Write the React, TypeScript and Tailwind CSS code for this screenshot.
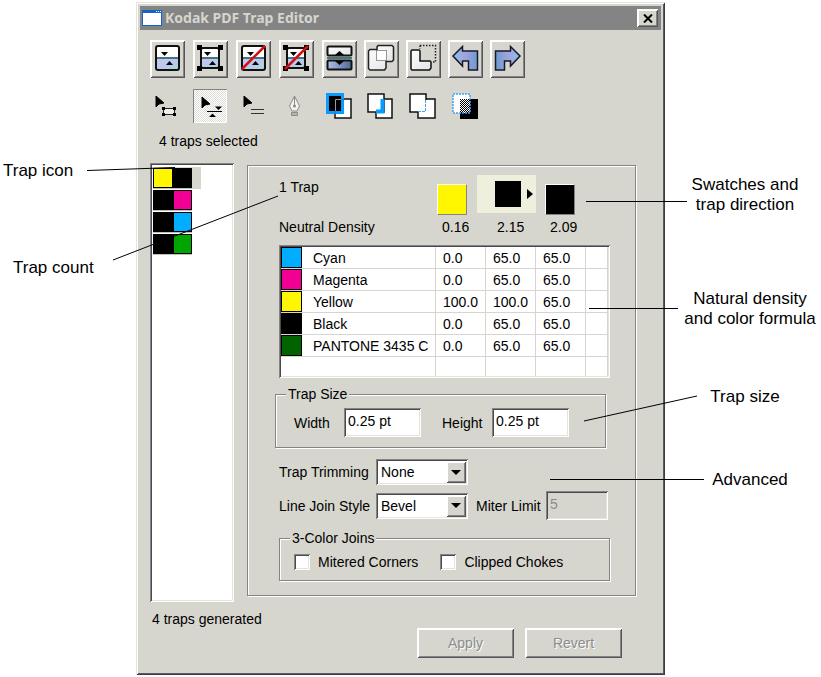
import React, { useState } from "react";

const raised =
  "shadow-[inset_1px_1px_0_#ffffff,inset_-1px_-1px_0_#55555a,inset_2px_2px_0_#ffffff,inset_-2px_-2px_0_#848484]";
const sunken =
  "shadow-[inset_1px_1px_0_#848484,inset_-1px_-1px_0_#ffffff,inset_2px_2px_0_#4a4a4e,inset_-2px_-2px_0_#e4e4dc]";
const etched = "border border-[#848484] shadow-[1px_1px_0_#ffffff,inset_1px_1px_0_#ffffff]";

type Tool = {
  label: string;
  icon: React.ReactNode;
  pressed?: boolean;
};

type Ink = {
  name: string;
  color: string;
  values: string[];
};

const inks: Ink[] = [
  { name: "Cyan", color: "bg-[#00adff]", values: ["0.0", "65.0", "65.0"] },
  { name: "Magenta", color: "bg-[#f20094]", values: ["0.0", "65.0", "65.0"] },
  { name: "Yellow", color: "bg-[#fff700]", values: ["100.0", "100.0", "65.0"] },
  { name: "Black", color: "bg-black", values: ["0.0", "65.0", "65.0"] },
  { name: "PANTONE 3435 C", color: "bg-[#006300]", values: ["0.0", "65.0", "65.0"] },
];

const traps = [
  { id: 1, from: "bg-[#fff700]", to: "bg-black", selected: true },
  { id: 2, from: "bg-black", to: "bg-[#f20094]", selected: false },
  { id: 3, from: "bg-black", to: "bg-[#00adff]", selected: false },
  { id: 4, from: "bg-black", to: "bg-[#00a500]", selected: false },
];

/* ---------- toolbar drawings ---------- */

const TrapPair = ({ x, y, w, h }: { x: number; y: number; w: number; h: number }) => (
  <>
    <rect x={x} y={y} width={w} height={h} rx="2" fill="#fff" />
    <path d={`M${x} 18H${x + w}V${y + h}H${x}z`} fill="url(#water)" />
    <path d={`M${x} 18H${x + w}`} stroke="#45767c" strokeWidth="2" />
    <rect x={x} y={y} width={w} height={h} rx="2" fill="none" stroke="#111" strokeWidth="2" />
    <path d="M11 12h7l-3.500 4zM16 25h7l-3.500-4z" fill="#000" />
  </>
);

const Corners = () => (
  <path d="M4 5h5v5H4zM25 5h5v5h-5zM4 26h5v5H4zM25 26h5v5h-5z" fill="#000" />
);

const Slash = () => <path d="M6 29L29 6" stroke="#d60f16" strokeWidth="2.500" />;

const Pointer = ({ x, y }: { x: number; y: number }) => (
  <path d={`M${x} ${y}v11l3-3 5-1z`} fill="#000" stroke="#000" strokeLinejoin="round" />
);

const trapIcon = <TrapPair x={6} y={6} w={23} h={24} />;

const boxedTrapIcon = (
  <>
    <TrapPair x={8} y={8} w={18} h={20} />
    <Corners />
  </>
);

const undoPath = "M5 16L14.500 6.500V11H29.500V30H20.500V21H14.500V26z";

const mainTools: Tool[] = [
  { label: "Show traps", icon: trapIcon },
  { label: "Show boxed traps", icon: boxedTrapIcon },
  { label: "Remove traps", icon: <>{trapIcon}<Slash /></> },
  { label: "Remove boxed traps", icon: <>{boxedTrapIcon}<Slash /></> },
  {
    label: "Split traps",
    icon: (
      <>
        <rect x="5.500" y="6.500" width="24" height="9" rx="1" fill="url(#paper)" stroke="#111" strokeWidth="2" />
        <path d="M13 15h9l-4.500-4z" fill="#000" />
        <path d="M5 18h25" stroke="#45767c" strokeWidth="2" />
        <rect x="5.500" y="20.500" width="24" height="9" rx="1" fill="url(#steel)" stroke="#111" strokeWidth="2" />
        <path d="M13 21h9l-4.500 4z" fill="#000" />
      </>
    ),
  },
];

const shapeTools: Tool[] = [
  {
    label: "Merge shapes",
    icon: (
      <>
        <path
          d="M4.500 11L6 9.500h7V7l1-1.500h14L29.500 7v13L28 21.500h-6V28L20.500 30H6L4.500 28.500z"
          fill="url(#paper)"
          stroke="#222"
          strokeWidth="1.500"
        />
        <path d="M12.500 10.500h10v10h-10z" fill="#fff" stroke="#333" strokeDasharray="1 1" />
      </>
    ),
  },
  {
    label: "Subtract shapes",
    icon: (
      <>
        <path d="M14 5.500h15.500V22H26M14 5.500V9" fill="none" stroke="#222" strokeWidth="1.500" strokeDasharray="1.500 1.500" />
        <path
          d="M5 11l1-1h7l1 1v10h10l1 1v6l-1.500 2H6l-1-1z"
          fill="url(#paper)"
          stroke="#111"
          strokeWidth="1.500"
        />
      </>
    ),
  },
  { label: "Undo", icon: <path d={undoPath} fill="url(#arrow)" stroke="#18182c" strokeWidth="1.500" /> },
  {
    label: "Redo",
    icon: (
      <g transform="translate(35 0) scale(-1 1)">
        <path d={undoPath} fill="url(#arrow)" stroke="#18182c" strokeWidth="1.500" />
      </g>
    ),
  },
];

const selectTools: Tool[] = [
  {
    label: "Select by frame",
    icon: (
      <>
        <Pointer x={6} y={7} />
        <rect x="13.500" y="19.500" width="11" height="6" fill="#eee" stroke="#222" />
        <path d="M12 18h3v3h-3zM23 18h3v3h-3zM12 24h3v3h-3zM23 24h3v3h-3z" fill="#000" />
      </>
    ),
  },
  {
    label: "Select trap",
    pressed: true,
    icon: (
      <>
        <Pointer x={9} y={8} />
        <path d="M14 22.500h15" stroke="#000" />
        <path d="M22 17.500h7l-3.500 3.500zM16 28h7l-3.500-3.500z" fill="#000" />
      </>
    ),
  },
  {
    label: "Select lines",
    icon: (
      <>
        <Pointer x={8} y={7} />
        <path d="M15 20.500h13M15 24.500h13" stroke="#33332e" />
      </>
    ),
  },
  {
    label: "Pen",
    icon: (
      <>
        <path d="M15.500 7L10.500 17l2.500 5h5l2.500-5z" fill="#f3f3ef" stroke="#8c8c86" />
        <path d="M15.500 7v9" stroke="#8c8c86" />
        <circle cx="15.500" cy="17" r="1.500" fill="#8c8c86" />
        <path d="M12.500 23.500h6v3h-6z" fill="#b6b6ae" stroke="#8c8c86" />
      </>
    ),
  },
  {
    label: "Trap front",
    icon: (
      <>
        <rect x="13" y="10" width="16" height="19" fill="#fff" stroke="#111" strokeWidth="1.500" />
        <rect x="5.500" y="5.500" width="15" height="18" fill="#000" stroke="#089cff" strokeWidth="3" />
        <path d="M13.500 22V10.500H19" fill="none" stroke="#999" />
        <path d="M13.500 25V22M19 10.500h3" stroke="#55697a" />
      </>
    ),
  },
];

const overlapTools: Tool[] = [
  {
    label: "Trap overlap edge",
    icon: (
      <>
        <rect x="12" y="10" width="16" height="19" fill="#fff" stroke="#111" strokeWidth="1.500" />
        <rect x="4" y="5" width="16" height="18" fill="#fff" stroke="#111" strokeWidth="1.500" />
        <path d="M18.500 10v12.500H12" fill="none" stroke="#089cff" strokeWidth="4" />
      </>
    ),
  },
  {
    label: "Trap hidden edge",
    icon: (
      <>
        <rect x="12" y="10" width="17" height="19" fill="#fff" stroke="#111" strokeWidth="1.500" />
        <path d="M12 23H4V5h16v6" fill="#fff" stroke="#111" strokeWidth="1.500" />
        <path d="M5 6h14v16H5z" fill="#fff" />
        <path d="M19.500 11v11.500H12" fill="none" stroke="#3ea4f4" strokeDasharray="3 1" />
      </>
    ),
  },
  {
    label: "Overprint",
    icon: (
      <>
        <path d="M12 10h18v20H12z" fill="#000" />
        <path d="M5 5h17v19H5z" fill="#fff" />
        <path d="M12 10h10v14H12z" fill="url(#checker)" />
        <path d="M5 5h17v19H5z" fill="none" stroke="#3ea4f4" strokeWidth="1.500" strokeDasharray="2 1" />
      </>
    ),
  },
];

const IconDefs = () => (
  <svg className="absolute h-0 w-0" aria-hidden="true">
    <defs>
      <linearGradient id="water" x1="0" x2="1" y1="0" y2="1">
        <stop offset="0" stopColor="#c6c6f4" />
        <stop offset="0.500" stopColor="#bcc8ec" />
        <stop offset="1" stopColor="#a9d5dc" />
      </linearGradient>
      <linearGradient id="paper" x1="0" x2="1" y1="0" y2="1">
        <stop offset="0" stopColor="#fff" />
        <stop offset="1" stopColor="#e2e2e5" />
      </linearGradient>
      <linearGradient id="steel" x1="0" x2="1">
        <stop offset="0" stopColor="#b4bce8" />
        <stop offset="1" stopColor="#4a6c9c" />
      </linearGradient>
      <linearGradient id="arrow" x1="0" x2="1">
        <stop offset="0" stopColor="#8cc0ea" />
        <stop offset="0.500" stopColor="#a2a2dc" />
        <stop offset="1" stopColor="#6a9cd0" />
      </linearGradient>
      <pattern id="checker" width="2" height="2" patternUnits="userSpaceOnUse">
        <path d="M0 0h2v2H0z" fill="#fff" />
        <path d="M0 0h1v1H0zM1 1h1v1H1z" fill="#000" />
      </pattern>
      <pattern id="dither" width="2" height="2" patternUnits="userSpaceOnUse">
        <path d="M0 0h2v2H0z" fill="#fff" />
        <path d="M0 0h1v1H0zM1 1h1v1H1z" fill="#deded8" />
      </pattern>
    </defs>
  </svg>
);

const MainButton = ({ tool }: { tool: Tool }) => (
  <button type="button" aria-label={tool.label} className={`h-[38px] w-[35px] ${raised}`}>
    <svg viewBox="0 0 35 38" className="h-[38px] w-[35px]">
      {tool.icon}
    </svg>
  </button>
);

const FlatButton = ({ tool }: { tool: Tool }) => (
  <button type="button" aria-label={tool.label} aria-pressed={!!tool.pressed} className="h-[34px] w-[35px]">
    <svg viewBox="0 0 35 34" className="h-[34px] w-[35px]">
      {tool.pressed && (
        <>
          <path d="M0 0h34v34H0z" fill="url(#dither)" />
          <path d="M0.500 34V0.500H34" fill="none" stroke="#848484" />
          <path d="M33.500 1v32.500H1" fill="none" stroke="#fff" />
        </>
      )}
      {tool.icon}
    </svg>
  </button>
);

/* ---------- form parts ---------- */

const Select = ({ id, options }: { id: string; options: string[] }) => (
  <div className="relative">
    <select id={id} className={`h-[26px] w-[92px] appearance-none bg-white pl-[5px] ${sunken}`}>
      {options.map((option) => (
        <option key={option}>{option}</option>
      ))}
    </select>
    <span
      className={`pointer-events-none absolute top-[2px] right-[2px] flex h-[22px] w-5 items-center justify-center bg-[#d6d6ce] ${raised}`}
    >
      <svg viewBox="0 0 10 5" className="h-[5px] w-2.5">
        <path d="M0 0h10L5 5z" />
      </svg>
    </span>
  </div>
);

const Check = ({ label }: { label: string }) => (
  <label className="flex items-center gap-2">
    <input type="checkbox" className={`h-4 w-4 appearance-none bg-white checked:bg-[#4a4a4e] ${sunken}`} />
    {label}
  </label>
);

const SizeField = ({ id, label }: { id: string; label: string }) => {
  const [value, setValue] = useState("0.25 pt");
  return (
    <div className="flex items-center">
      <label htmlFor={id} className="w-[50px]">
        {label}
      </label>
      <input
        id={id}
        value={value}
        onChange={(e) => setValue(e.target.value)}
        className={`h-[29px] w-[77px] bg-white pb-1 pl-1 ${sunken}`}
      />
    </div>
  );
};

const cell = "border-r border-b border-[#d6d6ce] pl-[7px]";

const InkTable = () => (
  <div className={`mt-1.5 bg-white p-[2px] ${sunken}`}>
    <table className="w-full table-fixed border-separate border-spacing-0 text-left">
      <colgroup>
        <col className="w-[21px]" />
        <col />
        <col className="w-[50px]" />
        <col className="w-[50px]" />
        <col className="w-[50px]" />
        <col className="w-[22px]" />
      </colgroup>
      <tbody>
        {inks.map((ink) => (
          <tr key={ink.name} className="h-[22px]">
            <td className="border-b border-[#d6d6ce] p-0">
              <div className={`h-[21px] border border-black ${ink.color}`} />
            </td>
            <th scope="row" className="border-r border-b border-[#d6d6ce] pl-[11px] font-normal whitespace-nowrap">
              {ink.name}
            </th>
            {ink.values.map((value, i) => (
              <td key={i} className={cell}>
                {value}
              </td>
            ))}
            <td className={cell} />
          </tr>
        ))}
        <tr className="h-[19px]">
          <td />
          <td className="border-r border-[#d6d6ce]" />
          <td className="border-r border-[#d6d6ce]" />
          <td className="border-r border-[#d6d6ce]" />
          <td className="border-r border-[#d6d6ce]" />
          <td className="border-r border-[#d6d6ce]" />
        </tr>
      </tbody>
    </table>
  </div>
);

const swatch = "h-[31px] w-[30px] border border-t-white border-r-[#848484] border-b-[#848484] border-l-white";

const TrapPanel = () => (
  <section className={`mt-[2px] min-w-0 flex-1 pt-[9px] pr-[25px] pb-[14px] pl-[31px] ${etched}`}>
    <div className="grid grid-cols-[minmax(0,1fr)_40px_68px_65px]">
      <div className="leading-6">1 Trap</div>
      <div className="flex h-10 items-end">
        <div className={`bg-[#fff700] ${swatch}`} />
      </div>
      <div className="flex h-[38px] w-[59px] items-center gap-1.5 bg-[#efefde] pl-[18px]">
        <div className="h-[26px] w-[26px] bg-black" />
        <svg viewBox="0 0 6 10" className="h-2.5 w-1.5">
          <path d="M0 0l6 5-6 5z" />
        </svg>
      </div>
      <div className="flex h-10 items-end">
        <div className={`bg-black ${swatch}`} />
      </div>
      <div className="leading-6">Neutral Density</div>
      <div className="pl-[5px] leading-6">0.16</div>
      <div className="pl-5 leading-6">2.15</div>
      <div className="pl-[5px] leading-6">2.09</div>
    </div>

    <InkTable />

    <fieldset className={`mt-1.5 mr-1 -ml-1 pb-2.5 pl-[18px] ${etched}`}>
      <legend className="-ml-2 bg-[#d6d6ce] px-0.5 leading-5">Trap Size</legend>
      <div className="flex gap-[21px] pt-1">
        <SizeField id="width" label="Width" />
        <SizeField id="height" label="Height" />
      </div>
    </fieldset>

    <div className="mt-[11px] flex items-center">
      <label htmlFor="trimming" className="w-[97px]">
        Trap Trimming
      </label>
      <Select id="trimming" options={["None", "Centerline"]} />
    </div>
    <div className="mt-1.5 flex items-center">
      <label htmlFor="join" className="w-[97px]">
        Line Join Style
      </label>
      <Select id="join" options={["Bevel", "Miter", "Round"]} />
      <label htmlFor="miter" className="w-[78px] pl-2">
        Miter Limit
      </label>
      <input id="miter" disabled defaultValue="5" className={`h-[29px] w-[62px] pb-1 pl-1 text-[#8c8c8c] ${sunken}`} />
    </div>

    <fieldset className={`mt-2 pb-2 pl-[14px] ${etched}`}>
      <legend className="-ml-1 bg-[#d6d6ce] px-0.5 leading-5">3-Color Joins</legend>
      <div className="flex gap-[22px] pt-1">
        <Check label="Mitered Corners" />
        <Check label="Clipped Chokes" />
      </div>
    </fieldset>
  </section>
);

const TrapList = () => (
  <ul className={`w-[84px] shrink-0 bg-white pt-1 pl-[3px] ${sunken}`}>
    {traps.map((trap) => (
      <li key={trap.id} className={`flex h-[22px] w-12 ${trap.selected ? "bg-[#d6d6ce]" : ""}`}>
        <div className="flex w-[39px] border-b border-[#c0c0b8] pt-px">
          <div className={`flex-1 border border-black ${trap.from}`} />
          <div className={`flex-1 border border-black ${trap.to}`} />
        </div>
      </li>
    ))}
  </ul>
);

const DialogButton = ({ children }: { children: React.ReactNode }) => (
  <button
    type="button"
    disabled
    className={`h-[30px] w-[97px] text-[#8c8c8c] [text-shadow:1px_1px_0_#ffffff] ${raised}`}
  >
    {children}
  </button>
);

const TrapEditor = () => (
  <main className="mt-[2px] bg-[#d6d6ce] p-1 text-[14px] leading-5 shadow-[inset_1px_1px_0_#e4e4dc,inset_-1px_-1px_0_#3c3c40,inset_2px_2px_0_#ffffff,inset_-2px_-2px_0_#5c5c60]">
    <header className="flex h-6 items-center bg-[#848484] pr-[3px] pl-0.5">
      <svg viewBox="0 0 20 16" className="h-4 w-5">
        <path d="M0 0h20v16H0z" fill="#1464c8" />
        <path d="M1 3h18v12H1z" fill="#fff" />
        <path d="M14 1h1v1h-1zM16 1h1v1h-1zM18 1h1v1h-1z" fill="#fff" />
      </svg>
      <h1 className="flex-1 pl-[3px] font-['Noto_Sans',sans-serif] text-[14px] font-bold text-[#d6d6ce]">
        Kodak PDF Trap Editor
      </h1>
      <button
        type="button"
        aria-label="Close"
        className={`flex h-[18px] w-[21px] items-center justify-center bg-[#d6d6ce] ${raised}`}
      >
        <svg viewBox="0 0 10 9" className="h-[9px] w-2.5">
          <path d="M1 0.500l8 8M9 0.500l-8 8" stroke="#000" strokeWidth="2" />
        </svg>
      </button>
    </header>

    <div className="pr-[25px] pb-[13px] pl-2.5">
      <div className="mt-2.5 flex gap-[7px]">
        <div className="flex gap-2">
          {mainTools.map((tool) => (
            <MainButton key={tool.label} tool={tool} />
          ))}
        </div>
        {shapeTools.map((tool) => (
          <MainButton key={tool.label} tool={tool} />
        ))}
      </div>
      <div className="mt-[11px] flex gap-[7px]">
        <div className="flex gap-2">
          {selectTools.map((tool) => (
            <FlatButton key={tool.label} tool={tool} />
          ))}
        </div>
        {overlapTools.map((tool) => (
          <FlatButton key={tool.label} tool={tool} />
        ))}
      </div>

      <p className="mt-2 pl-[9px]">4 traps selected</p>

      <div className="mt-3 flex gap-[13px]">
        <TrapList />
        <div className="flex min-w-0 flex-1 pb-[6px]">
          <TrapPanel />
        </div>
      </div>

      <footer className="mt-[7px] flex justify-between pr-[14px] pl-0.5">
        <p>4 traps generated</p>
        <div className="flex gap-[11px] pt-[19px]">
          <DialogButton>Apply</DialogButton>
          <DialogButton>Revert</DialogButton>
        </div>
      </footer>
    </div>
  </main>
);

const LeaderLines = () => (
  <svg className="pointer-events-none absolute inset-0 h-full w-full" fill="none" stroke="#000">
    <path d="M87 170.500L175 167.500M113 260L278 196" />
    <path d="M586 201.500H687M589 308.500H678M584 421L697 396M550 479.500H704" />
  </svg>
);

export default function App() {
  return (
    <div className="relative grid min-h-screen grid-cols-[136px_minmax(0,1fr)_156px] items-start bg-white font-['Liberation_Sans',Arial,sans-serif] text-black">
      <IconDefs />
      <aside className="pt-[161px] text-[17px] leading-5">
        <p className="pl-[3px]">Trap icon</p>
        <p className="mt-[77px] pl-[13px]">Trap count</p>
      </aside>
      <TrapEditor />
      <aside className="pt-[175px] pl-[14px] text-center text-[17px] leading-5">
        <p className="pr-2.5">
          Swatches and
          <br />
          trap direction
        </p>
        <p className="mt-[74px]">
          Natural density
          <br />
          and color formula
        </p>
        <p className="mt-[58px] pr-2.5">Trap size</p>
        <p className="mt-[63px]">Advanced</p>
      </aside>
      <LeaderLines />
    </div>
  );
}
